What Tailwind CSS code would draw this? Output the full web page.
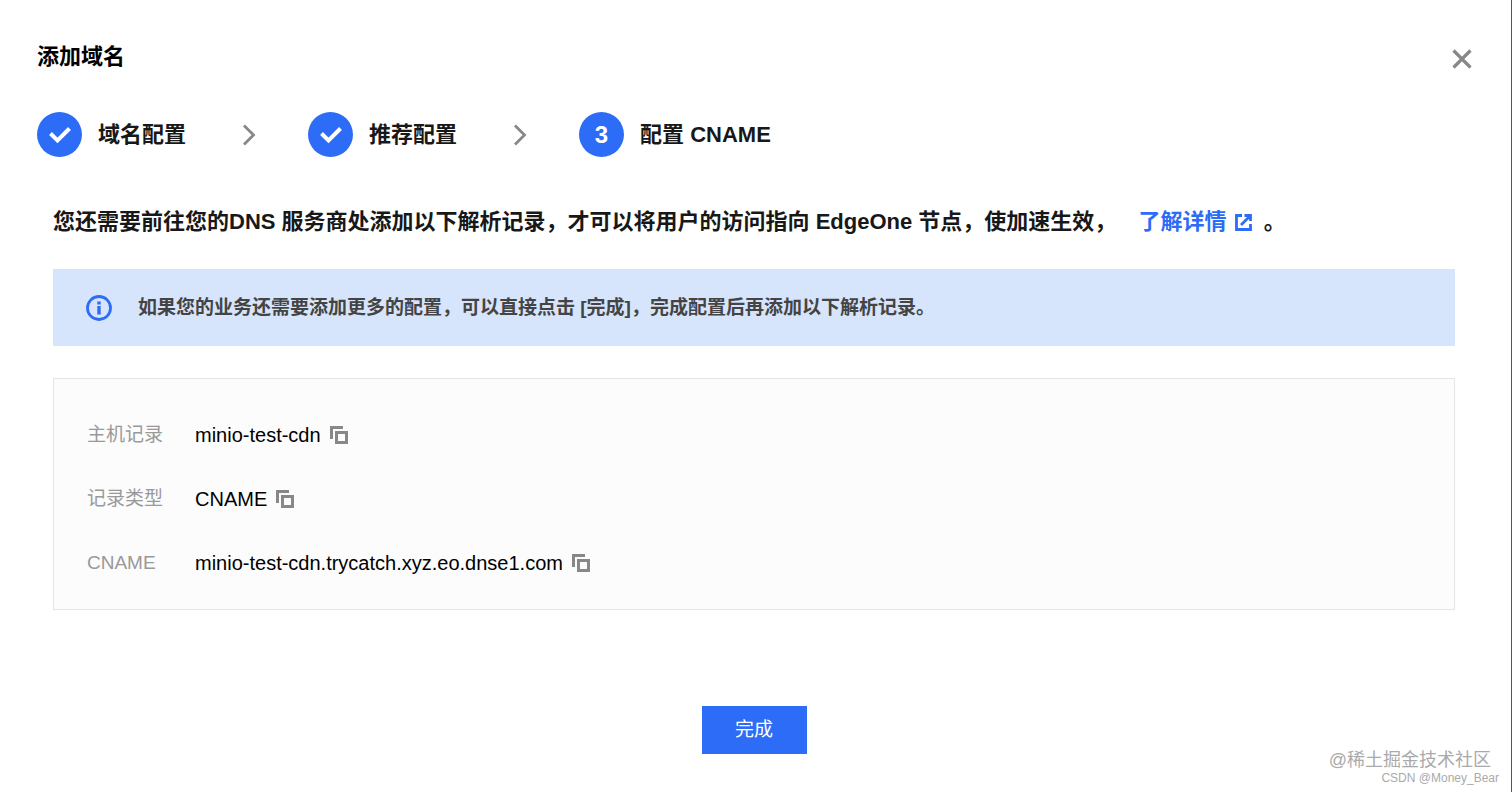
<!DOCTYPE html>
<html lang="zh-CN">
<head>
  <meta charset="UTF-8">
  <meta name="viewport" content="width=device-width, initial-scale=1.0">
  <title>添加域名</title>
  <script src="https://cdn.jsdelivr.net/npm/@tailwindcss/browser@4"></script>
</head>
<body class="bg-white font-['Liberation_Sans','Noto_Sans_CJK_SC',sans-serif] text-black">
  <div class="relative min-h-screen border-r border-[#555555] pb-9">

    <!-- title -->
    <header class="flex items-center justify-between pt-[41px] pl-[37px] pr-[39px]">
      <h1 class="text-[22px] leading-8 font-bold">添加域名</h1>
      <button type="button" aria-label="关闭" class="mt-1 cursor-pointer text-[#888888]">
        <svg class="block size-5" viewBox="0 0 20 20" fill="none" stroke="currentColor" stroke-width="3.200"><path d="M1.5 1.5l17 17M18.5 1.5l-17 17"/></svg>
      </button>
    </header>

    <!-- steps -->
    <ol class="mt-[39px] flex items-center pl-[37px] text-[22px] leading-8 font-bold text-[#181818]">
      <li class="flex items-center">
        <span class="flex size-[45px] items-center justify-center rounded-full bg-[#2d6cf6] text-white">
          <svg class="h-[18px] w-6" viewBox="0 0 24 18" fill="none" stroke="currentColor" stroke-width="4"><path d="M2.500 7.500l7 7L21.500 2.500"/></svg>
        </span>
        <span class="ml-4">域名配置</span>
        <svg class="ml-14 mr-[51px] h-[22px] w-[15px] text-[#888888]" viewBox="0 0 15 22" fill="none" stroke="currentColor" stroke-width="2.800"><path d="M2 1.500l9.500 9.500L2 20.500"/></svg>
      </li>
      <li class="flex items-center">
        <span class="flex size-[45px] items-center justify-center rounded-full bg-[#2d6cf6] text-white">
          <svg class="h-[18px] w-6" viewBox="0 0 24 18" fill="none" stroke="currentColor" stroke-width="4"><path d="M2.500 7.500l7 7L21.500 2.500"/></svg>
        </span>
        <span class="ml-4">推荐配置</span>
        <svg class="ml-14 mr-[51px] h-[22px] w-[15px] text-[#888888]" viewBox="0 0 15 22" fill="none" stroke="currentColor" stroke-width="2.800"><path d="M2 1.500l9.500 9.500L2 20.500"/></svg>
      </li>
      <li class="flex items-center">
        <span class="flex size-[45px] items-center justify-center rounded-full bg-[#2d6cf6] text-2xl text-white">3</span>
        <span class="ml-4">配置 CNAME</span>
      </li>
    </ol>

    <main class="pl-[53px] pr-14">
      <p class="mt-[49px] text-[22px] leading-8 font-bold text-[#181818]">您还需要前往您的DNS 服务商处添加以下解析记录，才可以将用户的访问指向 EdgeOne 节点，使加速生效， <a href="#" class="ml-4 inline-flex items-center gap-2 text-[#2d6cf6]">了解详情<svg class="size-[17px]" viewBox="0 0 17 17" fill="none" stroke="currentColor" stroke-width="2.800"><path d="M7 1.500H1.500v14h14V10M9.500 1.500h6V7M15 2L6 11"/></svg></a> <span class="ml-1.5">。</span></p>

      <!-- notice -->
      <div class="mt-[31px] flex items-center bg-[#d6e4fc] px-[33px] py-6 text-[19px] leading-[29px] text-[#444444]">
        <svg class="size-[26px] shrink-0 text-[#2d6cf6]" viewBox="0 0 26 26" fill="currentColor"><circle cx="13" cy="13" r="11.500" fill="none" stroke="currentColor" stroke-width="2.800"/><path d="M11.300 6.500h3.400v3h-3.400zM11.300 11h3.400v8.500h-3.400z"/></svg>
        <p class="ml-[26px] font-bold">如果您的业务还需要添加更多的配置，可以直接点击 [完成]，完成配置后再添加以下解析记录。</p>
      </div>

      <!-- records -->
      <dl class="mt-8 border border-[#e5e5e5] bg-[#fcfcfc] px-[33px] pt-6 pb-[14px] text-[19px] leading-8">
        <div class="flex h-16 items-center">
          <dt class="w-27 text-[#999999]">主机记录</dt>
          <dd class="flex items-center gap-2 text-xl">minio-test-cdn
            <button type="button" aria-label="复制" class="cursor-pointer text-[#888888]"><svg class="block size-5" viewBox="0 0 20 20" fill="none" stroke="currentColor" stroke-width="3"><path d="M2.500 14V2.500H14M7.500 7.500h10v10h-10z"/></svg></button>
          </dd>
        </div>
        <div class="flex h-16 items-center">
          <dt class="w-27 text-[#999999]">记录类型</dt>
          <dd class="flex items-center gap-2 text-xl">CNAME
            <button type="button" aria-label="复制" class="cursor-pointer text-[#888888]"><svg class="block size-5" viewBox="0 0 20 20" fill="none" stroke="currentColor" stroke-width="3"><path d="M2.500 14V2.500H14M7.500 7.500h10v10h-10z"/></svg></button>
          </dd>
        </div>
        <div class="flex h-16 items-center">
          <dt class="w-27 text-[#999999]">CNAME</dt>
          <dd class="flex items-center gap-2 text-xl">minio-test-cdn.trycatch.xyz.eo.dnse1.com
            <button type="button" aria-label="复制" class="cursor-pointer text-[#888888]"><svg class="block size-5" viewBox="0 0 20 20" fill="none" stroke="currentColor" stroke-width="3"><path d="M2.500 14V2.500H14M7.500 7.500h10v10h-10z"/></svg></button>
          </dd>
        </div>
      </dl>

      <div class="mt-24 flex justify-center">
        <button type="button" class="h-12 w-[105px] cursor-pointer bg-[#2d6cf6] text-[19px] text-white">完成</button>
      </div>
    </main>

    <!-- watermark -->
    <div class="absolute right-3 bottom-1.5 flex flex-col items-end text-[#aaaaaa]">
      <span class="mr-2 text-[18px] leading-5">@稀土掘金技术社区</span>
      <span class="text-[12px] leading-4">CSDN @Money_Bear</span>
    </div>
  </div>
</body>
</html>
